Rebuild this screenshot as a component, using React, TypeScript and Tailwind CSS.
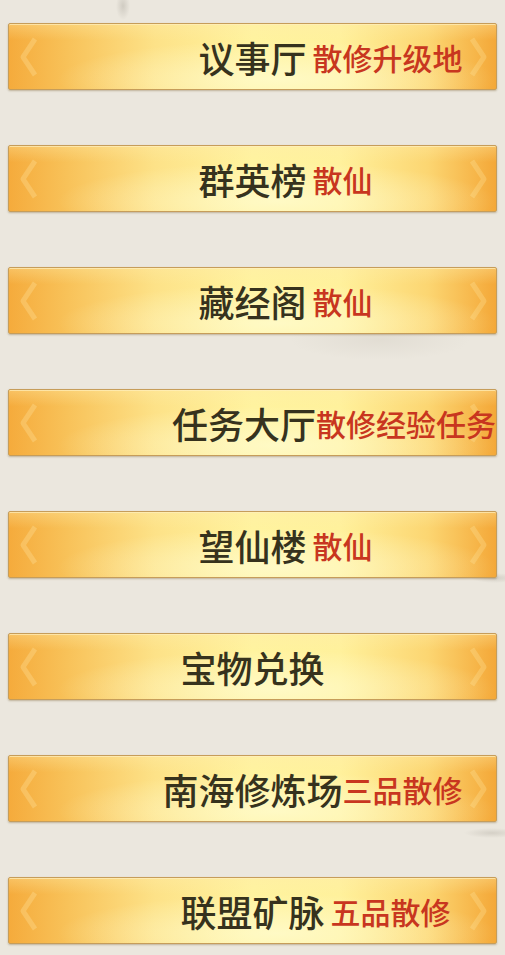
import React from "react";

type Item = { name: string; tag?: string; spaced?: boolean };

const items: Item[] = [
  { name: "议事厅", tag: "散修升级地", spaced: true },
  { name: "群英榜", tag: "散仙", spaced: true },
  { name: "藏经阁", tag: "散仙", spaced: true },
  { name: "任务大厅", tag: "散修经验任务" },
  { name: "望仙楼", tag: "散仙", spaced: true },
  { name: "宝物兑换" },
  { name: "南海修炼场", tag: "三品散修" },
  { name: "联盟矿脉", tag: "五品散修", spaced: true },
];

function Chevrons() {
  return (
    <>
      <svg
        className="pointer-events-none absolute left-[10px] top-1/2 -translate-y-1/2"
        width="20"
        height="44"
        viewBox="0 0 20 44"
      >
        <polyline points="16,4 4,22 16,40" fill="none" stroke="rgba(255,232,165,0.3)" strokeWidth="5" strokeLinejoin="round" />
      </svg>
      <svg
        className="pointer-events-none absolute right-[8px] top-1/2 -translate-y-1/2"
        width="20"
        height="44"
        viewBox="0 0 20 44"
      >
        <polyline points="4,4 16,22 4,40" fill="none" stroke="rgba(255,232,165,0.28)" strokeWidth="5" strokeLinejoin="round" />
      </svg>
    </>
  );
}

const font = "[font-family:'Noto_Sans_CJK_SC','Noto_Sans',sans-serif]";

function Btn({ item }: { item: Item }) {
  return (
    <div className="relative h-[67px] w-[489px] rounded-[2px] border border-[#c69d5a] bg-[radial-gradient(ellipse_45%_60%_at_55%_85%,rgba(255,252,210,0.75),rgba(255,252,210,0)_100%),linear-gradient(180deg,rgba(255,236,170,0.35)_0%,rgba(255,236,170,0)_25%),linear-gradient(90deg,#f5ab3c_0%,#f8c259_12%,#fde288_30%,#fff39f_50%,#fff19c_68%,#fcd672_86%,#f4a838_100%)] shadow-[0_1px_2px_rgba(110,80,30,0.35),inset_0_1px_0_rgba(255,240,190,0.7)]">
      <Chevrons />
      <div className="relative grid h-full grid-cols-[1fr_auto_1fr] items-center">
        <div />
        <div className={`whitespace-nowrap text-[36px] leading-none font-medium text-[#36321d] ${font}`}>
          {item.name}
        </div>
        <div
          className={
            item.spaced
              ? `justify-self-start whitespace-nowrap pl-[6px] text-[30px] leading-none font-medium text-[#c8361f] ${font}`
              : `justify-self-start whitespace-nowrap text-[30px] leading-none font-medium text-[#c8361f] ${font}`
          }
        >
          {item.tag ?? ""}
        </div>
      </div>
    </div>
  );
}

export default function App() {
  return (
    <div className="h-[955px] w-[505px] overflow-hidden bg-[#ebe7de] bg-[radial-gradient(ellipse_7px_14px_at_123px_6px,rgba(175,170,160,0.45),rgba(175,170,160,0)_100%),radial-gradient(ellipse_24px_5px_at_495px_578px,rgba(190,185,175,0.5),rgba(190,185,175,0)_100%),radial-gradient(ellipse_28px_5px_at_492px_833px,rgba(190,185,175,0.5),rgba(190,185,175,0)_100%),radial-gradient(ellipse_90px_20px_at_380px_340px,rgba(222,217,207,0.7),rgba(222,217,207,0)_100%)]">
      <div className="flex flex-col gap-[55px] pl-[8px] pt-[23px]">
        {items.map((it) => (
          <Btn key={it.name} item={it} />
        ))}
      </div>
    </div>
  );
}
